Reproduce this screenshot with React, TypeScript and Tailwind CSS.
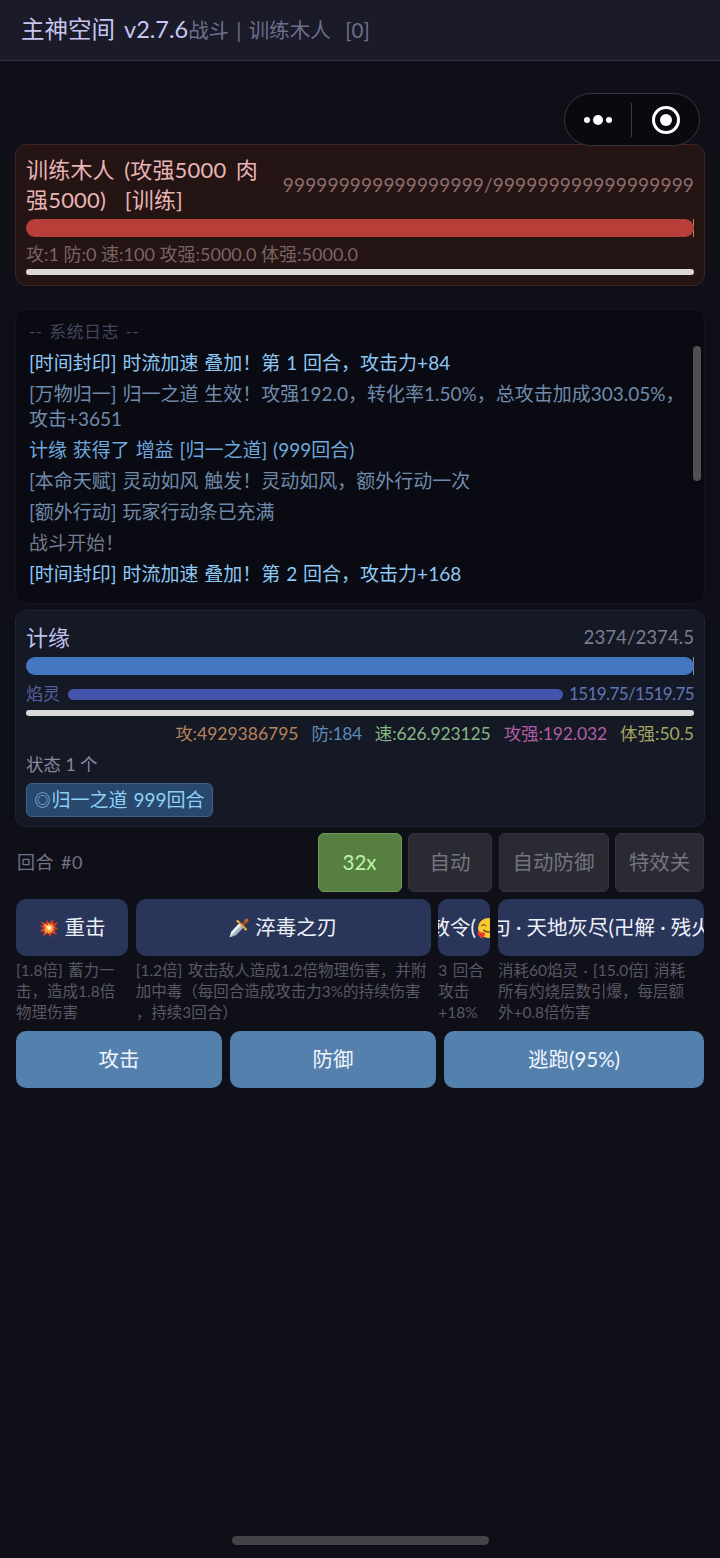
import { clsx } from "clsx";

const logs = [
  { text: "[时间封印] 时流加速 叠加！第 1 回合，攻击力+84", color: "text-[#8ec8f4]" },
  {
    text: "[万物归一] 归一之道 生效！攻强192.0，转化率1.50%，总攻击加成303.05%，\n攻击+3651",
    color: "text-[#6f8bab]",
  },
  { text: "计缘 获得了 增益 [归一之道] (999回合)", color: "text-[#6fa8dc]" },
  { text: "[本命天赋] 灵动如风 触发！灵动如风，额外行动一次", color: "text-[#6f8bab]" },
  { text: "[额外行动] 玩家行动条已充满", color: "text-[#6f8bab]" },
  { text: "战斗开始！", color: "text-[#727a8c]" },
  { text: "[时间封印] 时流加速 叠加！第 2 回合，攻击力+168", color: "text-[#8ec8f4]" },
];

const stats = [
  { label: "攻:4929386795", style: "text-[#b5835a]" },
  { label: "防:184", style: "text-[#5a8ab8] tracking-[-0.4px]" },
  { label: "速:626.923125", style: "text-[#86b886] tracking-[-0.13px]" },
  { label: "攻强:192.032", style: "text-[#b05fa4] tracking-[-0.1px]" },
  { label: "体强:50.5", style: "text-[#a5a562]" },
];

const toggles = [
  { label: "32x", width: "w-[84px]", active: true },
  { label: "自动", width: "w-[84px]" },
  { label: "自动防御", width: "w-[110px]" },
  { label: "特效关", width: "w-[89px]" },
];

function BurstIcon() {
  return (
    <svg viewBox="0 0 20 20" className="mr-[6px] size-[20px] shrink-0">
      <path
        d="M1 3l5.500 2.600L7.800 1.800l2 3.200L14.500.8l-.4 4.700L19 4l-3.200 4.400L19.500 11l-4.300.8L18 17l-5-2.300L11.500 19.500 9 15.300 4 18.500l1.200-5L.8 13.600 4 10 .8 7.500l4-.2z"
        fill="#d93a26"
      />
      <path d="M4.500 5.500l4 1.800 1-2.500 1.500 2.300 2.400-1.500-.1 2.800 2.500.2-2 2 1.600 1.700-2.500.3.800 2.500-2.600-1.200-1.200 2.200-1.300-2.200-2.700 1.500.7-2.700-2.300-.3 2-1.900z" fill="#fba43a" />
      <path d="M7.500 8l2.300.1.900-1.200.7 1.600 1.500.4-1 1.300.4 1.700-1.700-.6-1.200 1-.5-1.500-1.600-.3 1-1.100z" fill="#fff3c4" />
    </svg>
  );
}

function DaggerIcon() {
  return (
    <svg viewBox="0 0 20 20" className="mr-[6px] size-[20px] shrink-0">
      <path d="M.5 19.500L2.500 13.500 10.500 5l4.200 4.200L7 17.300z" fill="#a3b6c2" />
      <path d="M.5 19.500L2.500 13.500 10.500 5l2 2z" fill="#e6eff3" />
      <path d="M12.500 6l3.800-4 2 2-3.900 3.900z" fill="#9c4a24" />
      <path d="M8.200 3.800l1.500-1 7.400 7.300-1 1.600z" fill="#e3a63c" />
      <circle cx="8.700" cy="3.200" r="1.200" fill="#f0b94d" />
      <circle cx="16.600" cy="11.200" r="1.200" fill="#f0b94d" />
      <circle cx="17.500" cy="2.500" r="2" fill="#b8602a" />
    </svg>
  );
}

function LoveFaceIcon() {
  return (
    <svg viewBox="0 0 22 22" className="ml-px size-[22px] shrink-0">
      <circle cx="11" cy="11" r="10" fill="#fcc934" />
      <path d="M4.800 8.800q1.900-2.600 3.800 0M13.400 8.800q1.900-2.600 3.800 0" fill="none" stroke="#6b4410" strokeWidth="1.200" strokeLinecap="round" />
      <path d="M6.500 13q4.500 4 9 0" fill="none" stroke="#6b4410" strokeWidth="1.200" strokeLinecap="round" />
      <path d="M4.600 21.500Q-.5 17.500.8 15.300q1.700-1.800 3.600.5 2.600-1.500 3.600.6.500 2.200-3.400 5.100z" fill="#e53935" />
    </svg>
  );
}

const skills = [
  {
    name: "重击",
    icon: <BurstIcon />,
    desc: ["[1.8倍] 蓄力一", "击，造成1.8倍", "物理伤害"],
    width: "w-[112px]",
  },
  {
    name: "淬毒之刃",
    icon: <DaggerIcon />,
    desc: ["[1.2倍] 攻击敌人造成1.2倍物理伤害，并附", "加中毒（每回合造成攻击力3%的持续伤害", "，持续3回合）"],
    width: "w-[295px]",
  },
  {
    name: "敕令(",
    suffix: <LoveFaceIcon />,
    desc: ["3 回合", "攻击", "+18%"],
    width: "w-[52px]",
  },
  {
    name: "句 · 天地灰尽(卍解 · 残火",
    desc: ["消耗60焰灵 · [15.0倍] 消耗", "所有灼烧层数引爆，每层额", "外+0.8倍伤害"],
    width: "w-[206px]",
  },
];

const actions = [
  { label: "攻击", width: "w-[206px]" },
  { label: "防御", width: "w-[206px]" },
  { label: "逃跑(95%)", width: "w-[260px]" },
];

function Header() {
  return (
    <header className="flex h-[61px] items-center border-b border-[#2d2d40] bg-[#1a1a28] pl-[21px] whitespace-nowrap">
      <h1 className="text-[23.500px] text-[#c6c6f0] [word-spacing:3px]">主神空间 v2.7.6</h1>
      <span className="text-[20.500px] text-[#6e6e8c] [word-spacing:2px]">战斗 | 训练木人&nbsp; [0]</span>
    </header>
  );
}

function Capsule() {
  return (
    <div className="absolute top-[93px] right-[20px] flex h-[53px] w-[136px] items-center rounded-full border-[1.500px] border-[#37373d] bg-[#09090f]">
      <div className="flex w-[66px] items-center justify-center gap-[3px]">
        <span className="size-[6px] rounded-full bg-white" />
        <span className="size-[10px] rounded-full bg-white" />
        <span className="size-[6px] rounded-full bg-white" />
      </div>
      <div className="h-[34px] w-px bg-[#3c3c42]" />
      <div className="flex flex-1 items-center justify-center pl-px">
        <span className="flex size-[28px] items-center justify-center rounded-full border-[3px] border-white">
          <span className="size-[12px] rounded-full bg-white" />
        </span>
      </div>
    </div>
  );
}

function EnemyPanel() {
  return (
    <section className="h-[142px] rounded-[11px] border border-[#412326] bg-[#241414] px-[10px] pt-[10px]">
      <div className="flex items-center justify-between">
        <h2 className="text-[22px] leading-[30px] tracking-[0.2px] whitespace-nowrap text-[#e8b4b4] [word-spacing:3.500px]">
          训练木人 (攻强5000 肉
          <br />
          强5000)&nbsp; [训练]
        </h2>
        <span className="text-[19px] tracking-[0.16px] text-[#8e6c6d]">999999999999999999/999999999999999999</span>
      </div>
      <div className="mt-[4px] h-[18px] border-r border-[#b08a4a]">
        <div className="-mr-px h-full rounded-full bg-[#b83e3a]" />
      </div>
      <p className="mt-[4px] text-[18px] leading-[26px] text-[#7a6364]">攻:1 防:0 速:100 攻强:5000.0 体强:5000.0</p>
      <div className="mt-[2px] h-[6px] rounded-full bg-[#dcd8d8]" />
    </section>
  );
}

function BattleLog() {
  return (
    <section className="relative mt-[23px] h-[295px] rounded-[11px] border border-[#14141c] bg-[#0a0a12] py-[9px] pl-[13px]">
      <p className="mb-[6px] text-[17px] leading-[25px] tracking-[0.4px] text-[#45455e] [word-spacing:2px]">
        -- 系统日志 --
      </p>
      <div className="flex flex-col gap-[6px]">
        {logs.map((line) => (
          <p
            key={line.text}
            className={clsx("text-[19px] leading-[25px] whitespace-pre [word-spacing:1px]", line.color)}
          >
            {line.text}
          </p>
        ))}
      </div>
      <div className="absolute top-[36px] right-[3px] h-[135px] w-[8px] rounded-full bg-[#505052]" />
    </section>
  );
}

function PlayerPanel() {
  return (
    <section className="mt-[6px] h-[217px] rounded-[11px] border border-[#1f2538] bg-[#151825] px-[10px] pt-[11px]">
      <div className="flex h-[30px] items-center justify-between">
        <h2 className="text-[22px] text-[#c0c0ee]">计缘</h2>
        <span className="text-[18.700px] text-[#7c7c92]">2374/2374.5</span>
      </div>
      <div className="mt-[5px] h-[18px] border-r border-[#8a8a8a]">
        <div className="-mr-px h-full rounded-full bg-[#4576c2]" />
      </div>
      <div className="mt-[6px] flex h-[26px] items-center">
        <span className="text-[17px] text-[#5560a0]">焰灵</span>
        <div className="mr-[6px] ml-[8px] h-[11px] flex-1 rounded-full bg-[#4453ac]" />
        <span className="text-[17px] tracking-[-0.6px] text-[#6077b8]">1519.75/1519.75</span>
      </div>
      <div className="mt-[3px] h-[6px] rounded-full bg-[#dadada]" />
      <div className="mt-[5px] flex h-[26px] items-center justify-end gap-[13px] text-[17.500px]">
        {stats.map((stat) => (
          <span key={stat.label} className={stat.style}>
            {stat.label}
          </span>
        ))}
      </div>
      <p className="mt-[5px] text-[17.500px] leading-[26px] text-[#8888a0]">状态 1 个</p>
      <div className="mt-[5px] flex h-[34px] w-[187px] items-center justify-center rounded-[6px] border border-[#3f628c] bg-[#28486e] text-[19px] whitespace-nowrap text-[#8fd0f5] [word-spacing:1px]">
        <span className="mr-px text-[16px]">◎</span>
        归一之道 999回合
      </div>
    </section>
  );
}

function Toolbar() {
  return (
    <div className="mt-[6px] flex h-[59px] items-center gap-[6.500px]">
      <span className="flex-1 pl-px text-[18px] tracking-[0.5px] text-[#727286] [word-spacing:2px]">回合 #0</span>
      {toggles.map((toggle) => (
        <button
          key={toggle.label}
          className={clsx(
            "h-full rounded-[6px] border text-[20.500px]",
            toggle.width,
            toggle.active
              ? "border-[#6b9a58] bg-[#577f42] text-[#bdf5a4]"
              : "border-[#33333c] bg-[#2a2a32] text-[#74747f]"
          )}
        >
          {toggle.label}
        </button>
      ))}
    </div>
  );
}

function Skills() {
  return (
    <div className="mt-[7px] flex justify-between">
      {skills.map((skill) => (
        <div key={skill.name} className={skill.width}>
          <button className="flex h-[57px] w-full items-center justify-center overflow-hidden rounded-[10px] bg-[#2a3659] text-[20.500px] whitespace-nowrap text-[#eef0fa]">
            {skill.icon}
            <span className="shrink-0">{skill.name}</span>
            {skill.suffix}
          </button>
          <div className="mt-[4px] text-[15.500px] leading-[21px] whitespace-nowrap text-[#585866] [word-spacing:1.500px]">
            {skill.desc.map((row) => (
              <p key={row}>{row}</p>
            ))}
          </div>
        </div>
      ))}
    </div>
  );
}

export default function App() {
  return (
    <div className="relative h-[1558px] w-[720px] overflow-hidden bg-[#0f0f18] font-[Lato,'Noto_Sans_CJK_SC',sans-serif]">
      <Header />
      <main className="mt-[83px]">
        <div className="px-[15px]">
          <EnemyPanel />
          <BattleLog />
          <PlayerPanel />
        </div>
        <div className="px-4">
          <Toolbar />
          <Skills />
          <div className="mt-[8px] flex justify-between">
            {actions.map((action) => (
              <button
                key={action.label}
                className={clsx("h-[57px] rounded-[10px] bg-[#5480ae] text-[20.500px] text-[#f2f6fc]", action.width)}
              >
                {action.label}
              </button>
            ))}
          </div>
        </div>
      </main>
      <Capsule />
      <div className="absolute bottom-[13px] left-[232px] h-[9px] w-[257px] rounded-full bg-[#434349]" />
    </div>
  );
}
